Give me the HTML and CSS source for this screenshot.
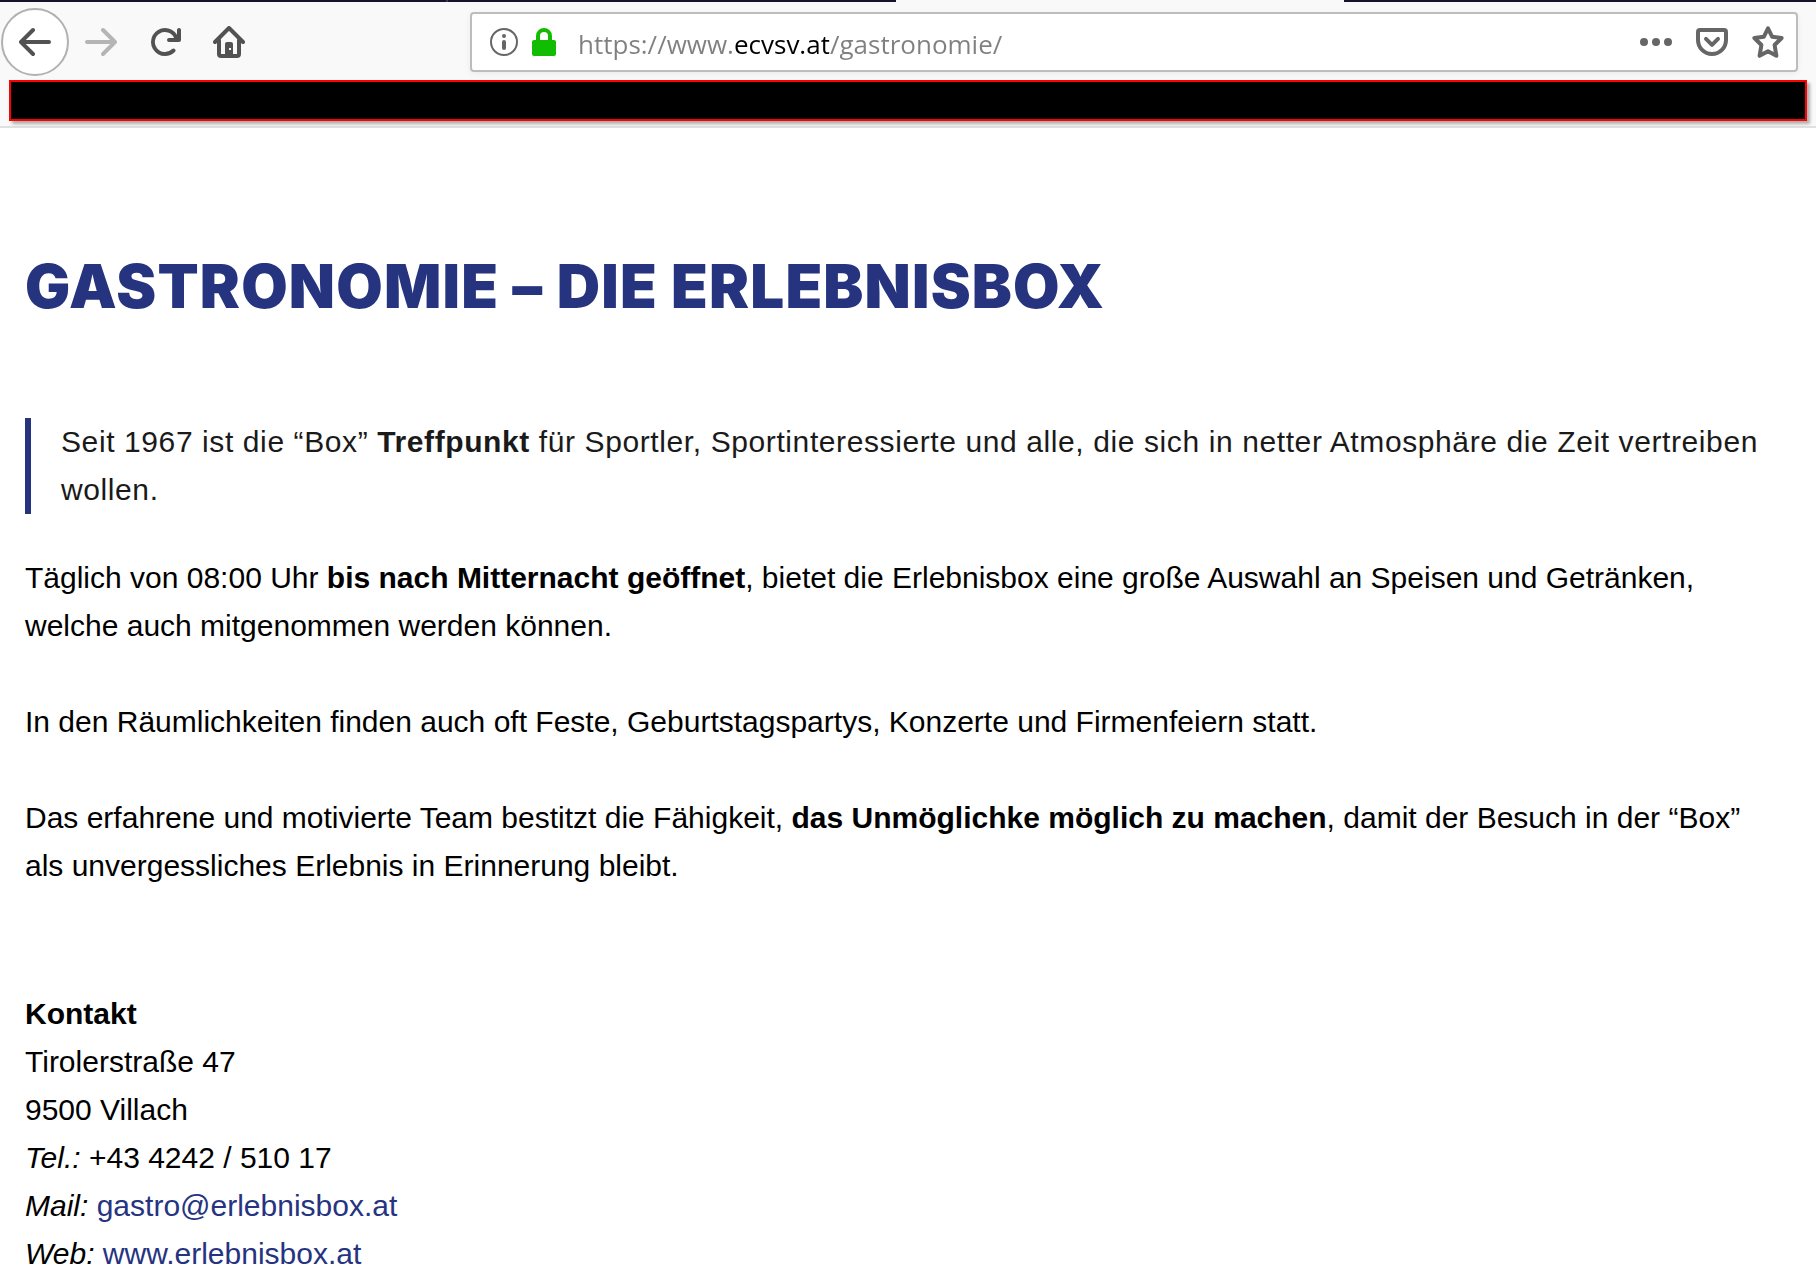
FILE: index.html
```
<!DOCTYPE html>
<html lang="de">
<head>
  <meta charset="UTF-8">
  <meta name="viewport" content="width=device-width, initial-scale=1">
  <title>Gastronomie – Die Erlebnisbox</title>
  <link rel="stylesheet" href="styles.css">
</head>
<body>
  <header class="browser">
    <div class="tab-strip">
      <span class="tab first"></span>
      <span class="tab"></span>
      <span class="tab active"></span>
      <span class="tab rest"></span>
    </div>

    <div class="toolbar">
      <nav class="nav-buttons">
        <button type="button" class="nav-btn back" aria-label="Zurück">
          <svg class="icon" viewBox="0 0 16 16"><path d="M15 7H3.414l4.293-4.293a1 1 0 0 0-1.414-1.414l-6 6a1 1 0 0 0 0 1.414l6 6a1 1 0 0 0 1.414-1.414L3.414 9H15a1 1 0 0 0 0-2z"/></svg>
        </button>
        <button type="button" class="nav-btn" aria-label="Vor" disabled>
          <svg class="icon" viewBox="0 0 16 16"><path d="M1 7h11.586L8.293 2.707a1 1 0 0 1 1.414-1.414l6 6a1 1 0 0 1 0 1.414l-6 6a1 1 0 0 1-1.414-1.414L12.586 9H1a1 1 0 0 1 0-2z"/></svg>
        </button>
        <button type="button" class="nav-btn" aria-label="Neu laden">
          <svg class="icon" viewBox="0 0 16 16"><path d="M15 1a1 1 0 0 0-1 1v2.418A6.995 6.995 0 1 0 8 15a6.954 6.954 0 0 0 4.95-2.05 1 1 0 0 0-1.414-1.414A5.019 5.019 0 1 1 12.549 6H10a1 1 0 0 0 0 2h5a1 1 0 0 0 1-1V2a1 1 0 0 0-1-1z"/></svg>
        </button>
        <button type="button" class="nav-btn" aria-label="Startseite">
          <svg class="icon" viewBox="0 0 16 16">
            <path class="line" d="M1 8l7-7 7 7M3 7v7a1 1 0 0 0 1 1h8a1 1 0 0 0 1-1V7"/>
            <path fill-rule="evenodd" d="M6 15V9a1 1 0 0 1 1-1h2a1 1 0 0 1 1 1v6zM8 11v1h1v-1z"/>
          </svg>
        </button>
      </nav>

      <div class="url-bar">
        <svg class="icon info" viewBox="0 0 16 16">
          <circle class="thin" cx="8" cy="8" r="6.5"/>
          <circle cx="8" cy="5" r="1"/>
          <path d="M7 8a1 1 0 0 1 2 0v3a1 1 0 0 1-2 0z"/>
        </svg>
        <svg class="icon lock" viewBox="0 0 16 16">
          <path fill-rule="evenodd" d="M4 7V5a4 4 0 0 1 8 0v2h1a1 1 0 0 1 1 1v6a1 1 0 0 1-1 1H3a1 1 0 0 1-1-1V8a1 1 0 0 1 1-1zM6 7h4V5a2 2 0 0 0-4 0z"/>
        </svg>
        <input class="url" type="text" aria-label="Adresse" spellcheck="false" value="https://www.ecvsv.at/gastronomie/">
        <button type="button" class="page-btn" aria-label="Weitere Aktionen">
          <svg class="icon" viewBox="0 0 16 16"><circle cx="2" cy="8" r="2"/><circle cx="8" cy="8" r="2"/><circle cx="14" cy="8" r="2"/></svg>
        </button>
        <button type="button" class="page-btn" aria-label="Bei Pocket speichern">
          <svg class="icon" viewBox="0 0 16 16"><path class="line" d="M1 3a1 1 0 0 1 1-1h12a1 1 0 0 1 1 1v4a7 7 0 0 1-14 0zM5 6.400l3 3 3-3"/></svg>
        </button>
        <button type="button" class="page-btn" aria-label="Lesezeichen">
          <svg class="icon" viewBox="0 0 16 16"><path class="line" d="M8 1.200l2.100 4.200 4.700.6-3.500 3.500.9 5.400L8 12.600l-4.200 2.300.9-5.400L1.200 6l4.700-.6z"/></svg>
        </button>
      </div>
    </div>

    <div class="redacted"></div>
  </header>

  <main class="content">
    <h1>GASTRONOMIE – DIE ERLEBNISBOX</h1>

    <blockquote>
      Seit 1967 ist die “Box” <strong>Treffpunkt</strong> für Sportler, Sportinteressierte und alle, die sich in netter Atmosphäre die Zeit vertreiben wollen.
    </blockquote>

    <p>Täglich von 08:00 Uhr <strong>bis nach Mitternacht geöffnet</strong>, bietet die Erlebnisbox eine große Auswahl an Speisen und Getränken, welche auch mitgenommen werden können.</p>

    <p>In den Räumlichkeiten finden auch oft Feste, Geburtstagspartys, Konzerte und Firmenfeiern statt.</p>

    <p>Das erfahrene und motivierte Team bestitzt die Fähigkeit, <strong>das Unmöglichke möglich zu machen</strong>, damit der Besuch in der “Box” als unvergessliches Erlebnis in Erinnerung bleibt.</p>

    <address class="contact">
      <strong>Kontakt</strong><br>
      Tirolerstraße 47<br>
      9500 Villach<br>
      <em>Tel.:</em> +43 4242 / 510 17<br>
      <em>Mail:</em> <a href="mailto:gastro@erlebnisbox.at">gastro@erlebnisbox.at</a><br>
      <em>Web:</em> <a href="http://www.erlebnisbox.at">www.erlebnisbox.at</a>
    </address>
  </main>
</body>
</html>
```
FILE: styles.css
```
* {
  box-sizing: border-box;
}

body {
  margin: 0;
  background: #fff;
  color: #000;
  font-family: "Liberation Sans", Arial, sans-serif;
  font-size: 30px;
  line-height: 48px;
}

/* browser chrome */
.browser {
  background: #f9f9f9;
  border-bottom: 2px solid #e0e0e0;
}

.tab-strip {
  display: flex;
  height: 2px;
}

.tab {
  width: 448px;
  background: #15142b;
}

.tab.first {
  border-right: 2px solid #3b3a4e;
}

.tab.active {
  background: #f9f9f9;
}

.tab.rest {
  flex: 1;
}

.toolbar {
  display: flex;
  align-items: center;
  height: 78px;
  padding: 2px 18px 0 1px;
}

.nav-buttons {
  display: flex;
  align-items: center;
}

button {
  display: flex;
  align-items: center;
  justify-content: center;
  padding: 0;
  border: none;
  background: none;
  cursor: pointer;
}

.nav-btn {
  width: 64px;
  height: 64px;
  color: #525252;
}

.nav-btn.back {
  width: 68px;
  height: 68px;
  border: 2px solid #b1b1b1;
  border-radius: 50%;
  background: #fff;
}

.nav-btn:disabled {
  color: #b5b5b5;
}

.icon {
  width: 32px;
  height: 32px;
  flex: none;
  fill: currentColor;
}

.line,
.thin {
  fill: none;
  stroke: currentColor;
  stroke-width: 2;
  stroke-linecap: round;
  stroke-linejoin: round;
}

.thin {
  stroke-width: 1;
}

.url-bar {
  flex: 1;
  display: flex;
  align-items: center;
  height: 60px;
  margin-left: 209px;
  padding-left: 16px;
  border: 2px solid #bdbdbd;
  border-radius: 4px;
  background: #fff;
  color: #666;
  box-shadow: 0 2px 6px rgba(0, 0, 0, 0.06);
}

.lock {
  margin: 0 18px 0 8px;
  color: #12bc00;
}

/* the domain is darker than the rest of the address */
.url {
  flex: 1;
  min-width: 0;
  height: 48px;
  padding: 4px 0 0;
  border: none;
  outline: none;
  font-family: "Open Sans", "Noto Sans", sans-serif;
  font-size: 26px;
  color: transparent;
  background: linear-gradient(to right, #808080 156px, #000 156px, #000 251px, #808080 251px);
  -webkit-background-clip: text;
  background-clip: text;
}

.page-btn {
  width: 56px;
  height: 48px;
  color: #666;
}

.redacted {
  height: 41px;
  margin: 0 9px 5px;
  border: 2px solid #f00;
  background: #000;
  box-shadow: 3px 3px 3px rgba(0, 0, 0, 0.3);
}

/* page */
.content {
  padding: 122px 40px 0 25px;
}

h1 {
  margin: 0 0 96px;
  color: #26347f;
  font-family: Inter, sans-serif;
  font-size: 60px;
  font-weight: 900;
  line-height: 72px;
  letter-spacing: 0.02em;
}

blockquote {
  margin: 0 0 40px;
  padding-left: 30px;
  border-left: 6px solid #26347f;
  color: #1a1a1a;
  letter-spacing: 0.02em;
}

p {
  margin: 0 0 48px;
}

.contact {
  margin-top: 100px;
  font-style: normal;
}

a {
  color: #26347f;
  text-decoration: none;
}
```
